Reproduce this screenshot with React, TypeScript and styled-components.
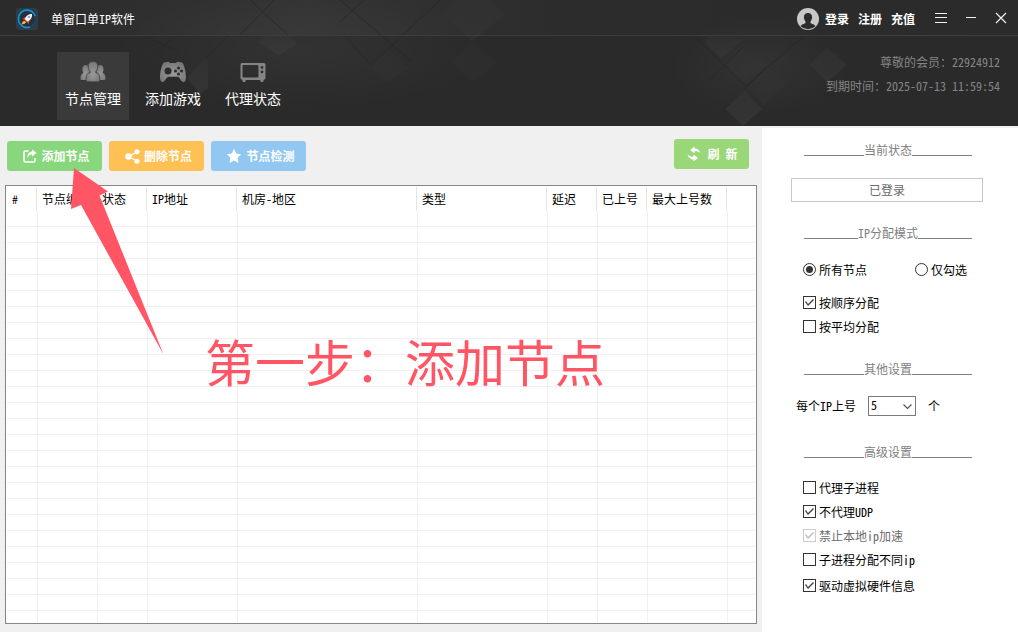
import React from "react";
import styled, { createGlobalStyle } from "styled-components";

const GlobalStyle = createGlobalStyle`
  *, *::before, *::after { box-sizing: border-box; }
  body { margin: 0; }
  body, button, input, select, table {
    font-family: "Noto Sans Mono CJK SC", "Noto Sans CJK SC", sans-serif;
    font-size: 12px;
    line-height: 16px;
  }
  button { margin: 0; padding: 0; border: 0; background: none; cursor: pointer; }
`;

const Window = styled.div`
  display: flex;
  flex-direction: column;
  height: 100vh;
  background: #f0f0f0;
  color: #000;
`;

const Header = styled.header`
  position: relative;
  flex: none;
  overflow: hidden;
  background: #2a2a2a;
  color: #fff;
`;

const Backdrop = styled.svg`
  position: absolute;
  inset: 0;
`;

const TitleBar = styled.div`
  position: relative;
  display: flex;
  align-items: center;
  height: 36px;
  padding: 2px 10px 0 16px;
  border-bottom: 1px solid #3d3d3d;
`;

const AppTitle = styled.h1`
  flex: 1;
  margin: 0 0 0 13px;
  font-size: 12px;
  font-weight: 400;
`;

const Account = styled.div`
  display: flex;
  align-items: center;
  gap: 6px;
  margin-right: 20px;
`;

const AccountLinks = styled.nav`
  display: flex;
  gap: 9px;
`;

const AccountLink = styled.a`
  color: #fff;
  font-weight: 700;
  text-decoration: none;
`;

const WindowControls = styled.div`
  display: flex;
  gap: 17px;
`;

const WindowButton = styled.button`
  display: flex;
  width: 13px;
  height: 13px;
  color: #f0f0f0;
`;

const NavBar = styled.div`
  position: relative;
  display: flex;
  justify-content: space-between;
  height: 90px;
  padding: 16px 18px 6px 57px;
`;

const Tabs = styled.nav`
  display: flex;
  gap: 8px;
`;

const Tab = styled.button<{ $active?: boolean }>`
  display: flex;
  flex-direction: column;
  align-items: center;
  gap: 5px;
  width: 72px;
  height: 68px;
  padding-top: 9px;
  background: ${(p) => (p.$active ? "#3a3a3a" : "transparent")};
  color: #fff;
  font-size: 14px;
  line-height: 20px;
`;

const Member = styled.div`
  display: flex;
  flex-direction: column;
  gap: 8px;
  padding-top: 2px;
  color: #858585;
  text-align: right;
`;

const Body = styled.div`
  display: flex;
  flex: 1;
  min-height: 0;
`;

const Main = styled.main`
  position: relative;
  display: flex;
  flex: 1;
  flex-direction: column;
  min-width: 0;
  padding: 0 5px 8px;
`;

const Toolbar = styled.div`
  display: flex;
  flex: none;
  align-items: flex-start;
  justify-content: space-between;
  height: 59px;
  padding: 13px 8px 0 2px;
`;

const ToolGroup = styled.div`
  display: flex;
  gap: 7px;
  padding-top: 2px;
`;

const ToolButton = styled.button<{ $color: string; $compact?: boolean }>`
  display: flex;
  align-items: center;
  justify-content: center;
  gap: ${(p) => (p.$compact ? 6 : 4)}px;
  width: ${(p) => (p.$compact ? 75 : 95)}px;
  height: 30px;
  padding-left: ${(p) => (p.$compact ? 2 : 4)}px;
  border-radius: 3px;
  background: ${(p) => p.$color};
  color: #fff;
  font-weight: 700;
`;

const GridFrame = styled.div`
  flex: 1;
  min-height: 0;
  padding: 1px;
  overflow: hidden;
  border: 1px solid #828790;
  background: #fff;
`;

const Clip = styled.div`
  height: 100%;
  overflow: hidden;
`;

const Grid = styled.table`
  width: 100%;
  border-spacing: 0;
  table-layout: fixed;
`;

const HeadCell = styled.th<{ $width?: number }>`
  width: ${(p) => (p.$width ? `${p.$width}px` : "auto")};
  height: 24px;
  padding: 0 0 0 5px;
  overflow: hidden;
  border-right: ${(p) => (p.$width ? "1px solid #e5e5e5" : "0")};
  font-weight: 400;
  text-align: left;
  white-space: nowrap;
`;

const Cell = styled.td`
  height: 16px;
  padding: 0;
  border-bottom: 1px solid #f0f0f0;
  & + & { border-left: 1px solid #f0f0f0; }
`;

const Arrow = styled.svg`
  position: absolute;
  top: 42px;
  left: 71px;
  pointer-events: none;
`;

const StepNote = styled.p`
  position: absolute;
  top: 198px;
  left: 205px;
  margin: 0;
  color: #ff5565;
  font-family: "Noto Sans CJK SC", sans-serif;
  font-size: 50px;
  line-height: 72px;
  white-space: nowrap;
  pointer-events: none;
`;

const Side = styled.aside`
  flex: none;
  width: 256px;
  margin-top: 2px;
  padding: 15px 35px 0 29px;
  background: #fff;
`;

const SectionTitle = styled.h2<{ $top?: number }>`
  display: flex;
  height: 16px;
  margin: ${(p) => p.$top ?? 0}px 11px 0 13px;
  color: #808080;
  font-size: 12px;
  font-weight: 400;
  line-height: 14px;
  &::before, &::after {
    content: "";
    flex: 1;
    height: 13px;
    border-bottom: 1px solid #808080;
  }
`;

const Status = styled.div`
  height: 24px;
  margin-top: 19px;
  border: 1px solid #c8c8c8;
  color: #696969;
  line-height: 22px;
  text-align: center;
`;

const Stack = styled.div<{ $top: number }>`
  display: flex;
  flex-direction: column;
  gap: 1px;
  margin: ${(p) => p.$top}px 0 0 12px;
`;

const RadioRow = styled.div`
  display: grid;
  grid-template-columns: 112px 1fr;
  margin: 16px 0 0 12px;
`;

const Option = styled.label<{ $muted?: boolean }>`
  display: flex;
  align-items: center;
  gap: 3px;
  height: 23px;
  color: ${(p) => (p.$muted ? "#6d6d6d" : "#000")};
  white-space: nowrap;
`;

const Tick = styled.input`
  appearance: none;
  flex: none;
  width: 13px;
  height: 13px;
  margin: 0;
  border: 1px solid #333;
  background: #fff;
  &:checked::before {
    content: "";
    display: block;
    width: 11px;
    height: 11px;
    background: #444;
    clip-path: polygon(1px 5px, 2px 4px, 4px 7px, 9px 2px, 10px 3px, 4px 9px);
  }
  &:disabled { border-color: #ccc; }
  &:disabled::before { background: #bbb; }
`;

const Radio = styled.input`
  appearance: none;
  flex: none;
  width: 13px;
  height: 13px;
  margin: 0;
  padding: 2px;
  border: 1px solid #333;
  border-radius: 50%;
  background: #fff;
  &:checked::before {
    content: "";
    display: block;
    width: 7px;
    height: 7px;
    border-radius: 50%;
    background: #333;
  }
`;

const LimitRow = styled.div`
  display: flex;
  align-items: center;
  gap: 12px;
  height: 20px;
  margin: 18px 0 0 5px;
`;

const SelectBox = styled.div`
  position: relative;
  display: flex;
  svg { position: absolute; top: 8px; right: 4px; pointer-events: none; }
`;

const Select = styled.select`
  appearance: none;
  width: 48px;
  height: 20px;
  padding: 0 0 2px 2px;
  border: 1px solid #7a7a7a;
  border-radius: 0;
  background: #fff;
  color: #000;
`;

const HeaderBackdrop = () => (
  <Backdrop width="100%" height="100%" viewBox="0 0 1018 126" preserveAspectRatio="xMinYMin slice" aria-hidden="true">
    <defs>
      <linearGradient id="top" x1="0" x2="1" y1="0" y2="0">
        <stop offset="0" stopColor="#2b2b2b" />
        <stop offset=".3" stopColor="#333" />
        <stop offset=".55" stopColor="#2c2c2c" />
        <stop offset="1" stopColor="#2b2b2b" />
      </linearGradient>
      <linearGradient id="tile" x1="0" x2="0" y1="0" y2="1">
        <stop offset="0" stopColor="#333" />
        <stop offset="1" stopColor="#3a3a3a" />
      </linearGradient>
      <radialGradient id="glow">
        <stop offset="0" stopColor="#fff" stopOpacity=".04" />
        <stop offset="1" stopColor="#fff" stopOpacity="0" />
      </radialGradient>
    </defs>
    <rect width="1018" height="35" fill="url(#top)" />
    <ellipse cx="300" cy="50" rx="190" ry="60" fill="url(#glow)" />
    <ellipse cx="760" cy="66" rx="90" ry="50" fill="url(#glow)" />
    <g fill="url(#tile)">
      <path d="M258 42l8-6h24l7 8-18 11z" opacity=".9" />
      <path d="M187 77l18-18 3 2v27l-8 6z" opacity=".6" />
      <path d="M442 14l30-28 34 28-34 27z" opacity=".35" />
      <path d="M370 66l17-18 22 20-22 14z" opacity=".2" />
      <path d="M452 62l20-20 26 20-26 20z" opacity=".2" />
      <path d="M704 42l6-6h24l7 6-20 16z" opacity=".5" />
      <path d="M725 63l18-20 22 20-22 20z" opacity=".25" />
      <path d="M810 65l17-18 20 18-20 17z" opacity=".5" />
      <path d="M725 109l18-20 19 20-19 17z" opacity=".65" />
      <path d="M744 84l22-20 20 19-22 22z" opacity=".2" />
    </g>
    <g stroke="#242424" strokeWidth="1" opacity=".6" fill="none">
      <path d="M240 35l34-35M250 0l38 35M340 22l24-22M340 0l48 41M345 36l25 28M370 66l70-66M145 36l34 16M154 54l22-18M205 59l24-23M412 62l-24-21M694 36l52 50 58-50M708 82l36-36M725 109l41-42" />
    </g>
  </Backdrop>
);

const AppLogo = () => (
  <svg width="22" height="22" viewBox="0 0 22 22" aria-hidden="true">
    <rect width="22" height="22" rx="3" fill="#2b3d46" />
    <circle cx="11" cy="11" r="8.6" fill="#2b2d3a" stroke="#15455f" strokeWidth="1.6" />
    <path d="M14 19A8.7 8.7 0 1 1 19.3 8" fill="none" stroke="#1593d6" strokeWidth="1.6" />
    <path d="M6.500 11l3-2 4 3.500-1 3.500-2-2.500-2-1.500z" fill="#e2503f" />
    <path d="M9 13l-2.500.5-.8 3 3-.8 1.500-1.500z" fill="#f6b83c" />
    <path d="M16 6c-3 0-5.500 1-7.200 5l2.400 2.500c3.800-1.500 5-4 4.800-7.500z" fill="#f2f4f7" />
    <circle cx="13" cy="9" r="1.200" fill="#8fa9bd" />
  </svg>
);

const Avatar = () => (
  <svg width="22" height="22" viewBox="0 0 22 22" aria-hidden="true">
    <circle cx="11" cy="11" r="11" fill="#c8c8c8" />
    <path d="M11 5c3 0 4.300 2 4.100 4.500-.1 2-1 3.200-1.600 4v1.500c1.500 1 4 1.300 5 3.200A11 11 0 0 1 3.500 18.200c1-1.900 3.500-2.200 5-3.200v-1.500c-.6-.8-1.500-2-1.600-4C6.700 7 8 5 11 5z" fill="#2c2c2c" />
  </svg>
);

const IconGradient = ({ id }: { id: string }) => (
  <radialGradient id={id} cx=".5" cy=".6" r=".6">
    <stop offset="0" stopColor="#9a9a9a" />
    <stop offset="1" stopColor="#777" />
  </radialGradient>
);

const UsersIcon = () => (
  <svg width="26" height="22" viewBox="0 0 26 22" aria-hidden="true">
    <IconGradient id="gu" />
    <g fill="url(#gu)">
      <path d="M5.500 4c2 0 3 .7 3.200 2 0 2.500.5 4 1.500 5L8 12.500C6.500 14 6.500 17 6.500 19H1.500Q.5 19 .5 17.500c0-3 .5-4.500 3-5.500C2 10.500 1.700 4 5.500 4z" />
      <path d="M20.500 4c-2 0-3 .7-3.200 2 0 2.500-.5 4-1.500 5l2.200 1.500c1.500 1.500 1.500 4.500 1.500 6.500h5q1 0 1-1.500c0-3-.5-4.500-3-5.500C24 10.500 24.300 4 20.500 4z" />
      <path stroke="#3a3a3a" strokeWidth=".7" d="M13 .6c3.500 0 5 2 4.800 5-.1 2.500-1 4-2 5v1c2.500.8 4 1.800 4 4.500v3.400c0 .8-.5 1.300-1.300 1.300h-11c-.8 0-1.300-.5-1.300-1.300v-3.400c0-2.700 1.500-3.700 4-4.500v-1c-1-1-1.900-2.500-2-5C8 2.600 9.500.6 13 .6z" />
    </g>
  </svg>
);

const GamepadIcon = () => (
  <svg width="26" height="22" viewBox="0 0 26 22" aria-hidden="true">
    <IconGradient id="gg" />
    <path fill="url(#gg)" d="M4 1.500L8 .8q1.200 0 2 1.300h6q.8-1.300 2-1.300l4 .7c2 1.200 4 9 4 14.500 0 3-1 5-2.500 5-2.500 0-3.500-5-6-5.300h-9C6 16 5 21 2.500 21 1 21 0 19 0 16 0 10.500 2 2.700 4 1.500z" />
    <g fill="#2c2c2c">
      <circle cx="8" cy="10" r="3.500" />
      <circle cx="18.500" cy="7" r="1.500" />
      <circle cx="18.500" cy="13" r="1.500" />
      <circle cx="15.500" cy="10" r="1.500" />
      <circle cx="21.500" cy="10" r="1.500" />
    </g>
  </svg>
);

const TvIcon = () => (
  <svg width="26" height="22" viewBox="0 0 26 22" aria-hidden="true">
    <path fill="#858585" fillRule="evenodd" d="M2 2h22q1.500 0 1.500 1.500V17q0 1.500-1.500 1.500L23 21h-2l-1-2H6l-1 2H3l-1-2.500Q.5 18.500.5 17V3.500Q.5 2 2 2zm1.500 2Q2.500 4 2.500 5v10.500q0 1 1 1H17q1.500 0 1.500-1V5q0-1-1.500-1zM22 5a1.400 1.400 0 1 0 0 2.800A1.400 1.400 0 0 0 22 5zm0 4.500a1.400 1.400 0 1 0 0 2.800 1.400 1.400 0 0 0 0-2.800z" />
  </svg>
);

const ExportIcon = () => (
  <svg width="14" height="14" viewBox="0 0 14 14" fill="none" aria-hidden="true">
    <path d="M5.500 2H2.500Q1 2 1 3.500v8Q1 13 2.500 13h8q1.500 0 1.500-1.500V9" stroke="#fff" strokeWidth="1.600" />
    <path d="M9 .5L13.500 4 9 7.600V5.400C6.500 5.400 5.600 6.500 4.500 9c-.3-4 1.500-6.200 4.500-6.400z" fill="#fff" />
  </svg>
);

const ShareIcon = () => (
  <svg width="15" height="15" viewBox="0 0 15 15" fill="#fff" aria-hidden="true">
    <path d="M12 2.700L4 7.500l8 4.800" fill="none" stroke="#fff" strokeWidth="1.200" />
    <circle cx="3.500" cy="7.500" r="3.200" />
    <circle cx="12" cy="2.800" r="2.500" />
    <circle cx="12" cy="12.200" r="2.500" />
  </svg>
);

const StarIcon = () => (
  <svg width="16" height="16" viewBox="0 0 16 16" fill="#fff" aria-hidden="true">
    <path d="M8 .8l2.200 4.700 5 .7-3.600 3.600.9 5.200L8 12.500 3.500 15l.9-5.200L.8 6.200l5-.7z" />
  </svg>
);

const RefreshIcon = () => (
  <svg width="14" height="16" viewBox="0 0 14 16" fill="#fff" aria-hidden="true">
    <path d="M7.500.5v2c3 .2 5 1.500 6 4.500-1.800-1.600-3.500-2-6-1.800v2L3 4z" />
    <path d="M6.500 15.500v-2C3.500 13.300 1.500 12 .5 8.200c1.800 2 3.500 2.600 6 2.400V8.500L11 12z" />
  </svg>
);

const columns = [
  { name: "#", width: 30 },
  { name: "节点编号", width: 60 },
  { name: "状态", width: 50 },
  { name: "IP地址", width: 90 },
  { name: "机房-地区", width: 180 },
  { name: "类型", width: 130 },
  { name: "延迟", width: 50 },
  { name: "已上号", width: 50 },
  { name: "最大上号数", width: 80 },
  { name: "" },
];

const EMPTY_ROWS = 26;

const Check = ({ label, checked, disabled }: { label: string; checked?: boolean; disabled?: boolean }) => (
  <Option $muted={disabled}>
    <Tick type="checkbox" defaultChecked={checked} disabled={disabled} />
    {label}
  </Option>
);

export default function App() {
  return (
    <Window lang="zh-CN">
      <GlobalStyle />
      <Header>
        <HeaderBackdrop />
        <TitleBar>
          <AppLogo />
          <AppTitle>单窗口单IP软件</AppTitle>
          <Account>
            <Avatar />
            <AccountLinks>
              <AccountLink href="#login">登录</AccountLink>
              <AccountLink href="#register">注册</AccountLink>
              <AccountLink href="#recharge">充值</AccountLink>
            </AccountLinks>
          </Account>
          <WindowControls>
            <WindowButton aria-label="菜单">
              <svg width="13" height="13" stroke="currentColor"><path d="M0 1.500h12M0 5.500h12M0 10.500h12" /></svg>
            </WindowButton>
            <WindowButton aria-label="最小化">
              <svg width="13" height="13" stroke="currentColor"><path d="M1 5.500h10" /></svg>
            </WindowButton>
            <WindowButton aria-label="关闭">
              <svg width="13" height="13" stroke="currentColor"><path d="M1 1l10 10M11 1L1 11" strokeWidth="1.200" /></svg>
            </WindowButton>
          </WindowControls>
        </TitleBar>
        <NavBar>
          <Tabs>
            <Tab $active><UsersIcon />节点管理</Tab>
            <Tab><GamepadIcon />添加游戏</Tab>
            <Tab><TvIcon />代理状态</Tab>
          </Tabs>
          <Member>
            <div>尊敬的会员：22924912</div>
            <div>到期时间：2025-07-13 11:59:54</div>
          </Member>
        </NavBar>
      </Header>
      <Body>
        <Main>
          <Toolbar>
            <ToolGroup>
              <ToolButton $color="#89d77d"><ExportIcon />添加节点</ToolButton>
              <ToolButton $color="#ffc154"><ShareIcon />删除节点</ToolButton>
              <ToolButton $color="#91c7f1"><StarIcon />节点检测</ToolButton>
            </ToolGroup>
            <ToolButton $color="#9ad778" $compact><RefreshIcon />刷 新</ToolButton>
          </Toolbar>
          <GridFrame>
            <Clip>
              <Grid>
                <thead>
                  <tr>
                    {columns.map((c) => (
                      <HeadCell key={c.name} $width={c.width} scope="col">{c.name}</HeadCell>
                    ))}
                  </tr>
                </thead>
                <tbody>
                  {Array.from({ length: EMPTY_ROWS }, (_, row) => (
                    <tr key={row}>
                      {columns.map((c) => <Cell key={c.name} />)}
                    </tr>
                  ))}
                </tbody>
              </Grid>
            </Clip>
          </GridFrame>
          <Arrow width="93" height="187" viewBox="0 0 93 187" aria-hidden="true">
            <path d="M3 0L37 23.500 28.500 27.500 92.500 186.500 10 37 0 41z" fill="#ff5565" />
          </Arrow>
          <StepNote>第一步：添加节点</StepNote>
        </Main>
        <Side>
          <SectionTitle>当前状态</SectionTitle>
          <Status>已登录</Status>
          <SectionTitle $top={24}>IP分配模式</SectionTitle>
          <RadioRow role="radiogroup" aria-label="IP分配模式">
            <Option><Radio type="radio" name="scope" defaultChecked />所有节点</Option>
            <Option><Radio type="radio" name="scope" />仅勾选</Option>
          </RadioRow>
          <Stack $top={10}>
            <Check label="按顺序分配" checked />
            <Check label="按平均分配" />
          </Stack>
          <SectionTitle $top={24}>其他设置</SectionTitle>
          <LimitRow>
            <label htmlFor="limit">每个IP上号</label>
            <SelectBox>
              <Select id="limit" defaultValue="5">
                <option>5</option>
                <option>10</option>
              </Select>
              <svg width="9" height="6" fill="none" stroke="#555" strokeWidth="1.200"><path d="M.5.500l4 4 4-4" /></svg>
            </SelectBox>
            <span>个</span>
          </LimitRow>
          <SectionTitle $top={29}>高级设置</SectionTitle>
          <Stack $top={15}>
            <Check label="代理子进程" />
            <Check label="不代理UDP" checked />
            <Check label="禁止本地ip加速" checked disabled />
            <Check label="子进程分配不同ip" />
          </Stack>
          <Stack $top={3}>
            <Check label="驱动虚拟硬件信息" checked />
          </Stack>
        </Side>
      </Body>
    </Window>
  );
}
